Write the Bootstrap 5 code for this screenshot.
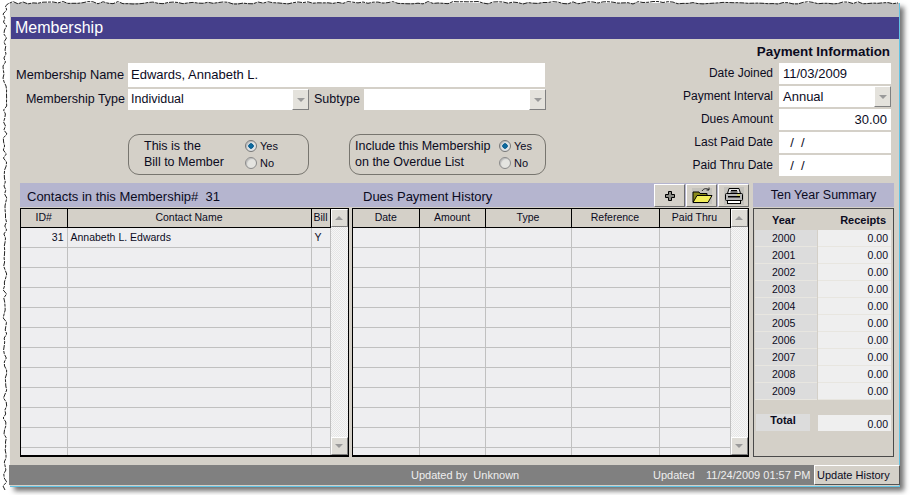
<!DOCTYPE html>
<html lang="en"><head><meta charset="utf-8"><title>Membership</title>
<link href="https://cdn.jsdelivr.net/npm/bootstrap@5.3.0/dist/css/bootstrap.min.css" rel="stylesheet">
<style>
html,body{height:495px;overflow:hidden;background:#fff}
body{font-family:"Liberation Sans",Arial,sans-serif;font-size:12.5px;color:#0b0b1e;line-height:1.2}
.torn{position:absolute;left:0;top:0;width:910px;height:495px;pointer-events:none}
.win{position:absolute;left:10px;top:3px;width:890px;height:484px;background:#d4d0c8;box-shadow:4px 4px 5px rgba(0,0,0,.55);border-right:1px solid #62c3e4;border-bottom:1px solid #62c3e4;display:flex;flex-direction:column}
.topstrip{height:14px;background:#c0c0c0;flex:none}
.titlebar{height:22px;margin-left:1px;background:#453f8b;color:#fff;font-size:16px;line-height:22px;padding-left:4px;flex:none}
.formarea{height:137px;flex:none;padding-right:8px}
.leftcol{width:536px;padding-top:24px;flex:none}
.lbl{white-space:nowrap}
.inp{background:#fff;height:100%;padding:0 3px;display:flex;align-items:center;white-space:nowrap;font-size:13px;flex:none}
.namerow{height:24px;margin-bottom:2px;padding-left:6px}
.namerow .lbl{width:109px;text-align:left;font-size:12.8px}
.namerow .inp{width:417px;margin-left:3px}
.typerow{height:21px;padding-left:6px}
.typerow .lbl{width:109px;text-align:right;font-size:12.5px}
.typerow .inp{margin-left:3px;font-size:12.5px}
.combo{position:relative;width:181px}
.combo2{width:182px}
.dropb{position:absolute;right:0;top:0;bottom:0;width:17px;background:#e4e2dc;border:1px solid;border-color:#fff #808080 #808080 #fff;display:flex;align-items:center;justify-content:center}
.tri{width:0;height:0;border-left:4px solid transparent;border-right:4px solid transparent;border-top:4px solid #9a9a9a}
.triup{border-top:0;border-bottom:4px solid #9a9a9a}
.subl{width:55px;padding-left:5px;font-size:12.5px;flex:none}
.radiorow{margin:24px 0 0 118px;gap:40px}
.rbox{height:41px;border:1px solid #77756f;border-radius:11px;display:flex;align-items:center;font-size:12.5px;line-height:16px;flex:none}
.rbox1{width:181px;padding-left:15px}
.rbox2{width:197px;padding-left:5px}
.rtxt1{width:101px;margin-top:-2px}
.rtxt2{width:144px;margin-top:-2px}
.rgroup{font-size:11px;line-height:17px}
.rgroup label{display:flex;align-items:center;gap:3px}
.rgroup .form-check-input{width:12px;height:12px;margin:0;background:#e4e4e0;border:1px solid #8a8a8a;box-shadow:inset 1px 1px 1px #bbb}
.rgroup .form-check-input:checked{background:radial-gradient(circle,#0c6fa8 0,#0c5f90 35%,#dfe3e6 42%);border-color:#777}
.rightcol{flex:1;padding-top:6px}
.payhead{font-weight:700;text-align:right;font-size:13.4px;height:14px;line-height:14px;padding-right:1px;margin-bottom:4px}
.payrow{height:21px;margin-bottom:2px;justify-content:flex-end}
.payrow .lbl{font-size:12px;margin-right:6px}
.payrow .inp{width:112px;font-size:13px;padding:0 4px 0 4px}
.gridarea{margin:7px 5px 0 10px;gap:4px;flex:none;height:274px}
.mainpanel{width:729px}
.band{height:24px;background:#b5b5cf;flex:none}
.bandt1{width:332px;padding-left:7px;font-size:13px;line-height:27px}
.bandt2{font-size:13px;padding-left:11px;line-height:28px;flex:1}
.tbtn{width:31px;height:23px;margin:1px 0 0 1px;background:#d4d0c8;border:1px solid;border-color:#fff #6d6d6d #6d6d6d #fff;padding:0;display:flex;align-items:center;justify-content:center;border-radius:0}
.grids{gap:3px;margin-top:1px;height:249px}
.gridbox{border:1px solid #000;border-width:1px 1px 2px 1px;height:249px;display:flex;overflow:hidden;background:#eeeef0}
.gbox1{width:329px}
.gbox2{width:397px}
.gridbox .gridtbl{table-layout:fixed;border-collapse:collapse;margin:0;height:auto;font-size:10.5px;background:#eeeef0;flex:none}
.gridtbl th{height:18px;padding:0;font-weight:400;background:#d4d0c8;text-align:center;vertical-align:middle;border-right:1px solid #000;border-bottom:1px solid #000;box-shadow:none;color:#0b0b1e}
.gridtbl td{height:20px;padding:0 3px;border:0;border-right:1px solid #c0c0c0;border-bottom:1px solid #c0c0c0;background:#eeeef0;color:#0b0b1e;box-shadow:none;white-space:nowrap;vertical-align:middle}
.scrollv{flex:1;display:flex;flex-direction:column;justify-content:space-between;background:conic-gradient(#f6f6f6 25%,#e6e6e6 0 50%,#f6f6f6 0 75%,#e6e6e6 0) 0 0/2px 2px}
.scrbtn{height:18px;background:#dedcd6;border:1px solid;border-color:#fff #808080 #808080 #fff;display:flex;align-items:center;justify-content:center}
.sidepanel{width:142px}
.bandside{height:24px;background:#b5b5cf;text-align:center;font-size:12.5px;line-height:24px;margin-bottom:1px}
.sumbox{border:1px solid #4a4a4a;height:249px;font-size:10.5px;padding:1px 2px 0 1px}
.sumhead{height:20px;font-weight:700;font-size:11px;line-height:20px}
.sumhead .yr{width:62px;padding-left:17px}
.sumhead .rc{flex:1;text-align:right;padding-right:5px}
.sumrow{height:17px;line-height:17px}
.sumrow .yr{width:62px;background:#dcdcdc;padding-left:17px;margin-right:1px;border-bottom:1px solid #e8e6e0}
.sumrow .rc{flex:1;background:#efefef;text-align:right;padding-right:3px;border-bottom:1px solid #e8e6e0}
.sumtot{margin-top:14px;height:17px;line-height:13px;font-weight:700;font-size:11px}
.sumtot .yr{width:54px;margin:0 8px 0 1px;background:#dcdcdc;text-align:center;height:17px}
.sumtot .rc{flex:1;background:#efefef;text-align:right;padding-right:3px;font-weight:400;font-size:10.5px;line-height:18px;height:16px;margin-top:1px}
.statusbar{margin-top:8px;height:20px;background:#808080;color:#eee;font-size:11px;margin-left:-1px;width:891px;flex:none;line-height:21px;position:relative}
.stat1{margin-left:402px;width:242px}
.stat2{width:53px}
.stat3{width:108px}
.updbtn{width:86px;height:20px;background:#d4d0c8;color:#0b0b1e;font-size:11px;border:1px solid;border-color:#fff #555 #555 #fff;padding:0 0 0 2px;border-radius:0;line-height:18px;text-align:left}
</style></head>
<body>
<div class="win">
  <div class="topstrip"></div>
  <div class="titlebar">Membership</div>
  <div class="formarea d-flex">
    <div class="leftcol">
      <div class="namerow d-flex align-items-center"><span class="lbl">Membership Name</span><div class="inp">Edwards, Annabeth L.</div></div>
      <div class="typerow d-flex align-items-center"><span class="lbl">Membership Type</span>
        <div class="inp combo">Individual<span class="dropb"><span class="tri"></span></span></div>
        <span class="subl">Subtype</span>
        <div class="inp combo combo2 ms-0"><span class="dropb"><span class="tri"></span></span></div>
      </div>
      <div class="radiorow d-flex">
        <div class="rbox rbox1"><div class="rtxt1">This is the<br>Bill to Member</div>
          <div class="rgroup"><label><input class="form-check-input" type="radio" name="r1" checked>Yes</label><label><input class="form-check-input" type="radio" name="r1">No</label></div></div>
        <div class="rbox rbox2"><div class="rtxt2">Include this Membership<br>on the Overdue List</div>
          <div class="rgroup"><label><input class="form-check-input" type="radio" name="r2" checked>Yes</label><label><input class="form-check-input" type="radio" name="r2">No</label></div></div>
      </div>
    </div>
    <div class="rightcol">
      <div class="payhead">Payment Information</div>
      <div class="payrow d-flex align-items-center"><span class="lbl">Date Joined</span><div class="inp">11/03/2009</div></div>
      <div class="payrow d-flex align-items-center"><span class="lbl">Payment Interval</span><div class="inp combo">Annual<span class="dropb"><span class="tri"></span></span></div></div>
      <div class="payrow d-flex align-items-center"><span class="lbl">Dues Amount</span><div class="inp justify-content-end">30.00</div></div>
      <div class="payrow d-flex align-items-center"><span class="lbl">Last Paid Date</span><div class="inp">&nbsp;&nbsp;/&nbsp;&nbsp;/</div></div>
      <div class="payrow d-flex align-items-center"><span class="lbl">Paid Thru Date</span><div class="inp">&nbsp;&nbsp;/&nbsp;&nbsp;/</div></div>
    </div>
  </div>
  <div class="gridarea d-flex">
    <div class="mainpanel d-flex flex-column">
      <div class="band d-flex">
        <div class="bandt1">Contacts in this Membership#&nbsp; 31</div>
        <div class="bandt2">Dues Payment History</div>
        <button class="tbtn btn" type="button" aria-label="Add"><svg width="12" height="12" viewBox="0 0 12 12"><path d="M4.500 1.500h3v3h3v3h-3v3h-3v-3h-3v-3h3z" fill="#8a8a84" stroke="#000" stroke-width="1"/></svg></button>
        <button class="tbtn btn" type="button" aria-label="Open"><svg width="22" height="18" viewBox="0 0 22 18"><rect x="1" y="1" width="20" height="16" fill="#c4c2bc"/><path d="M2 15V5h6l1 1.500h7V15z" fill="#8a8a1a" stroke="#000"/><path d="M2 15.500L6 8.500h15l-4 7z" fill="#f2ee5a" stroke="#000"/><path d="M11 4c2-3 5-3 7-1M18 3V0.500M18 3h-2.500" fill="none" stroke="#222" stroke-width="1"/></svg></button>
        <button class="tbtn btn" type="button" aria-label="Print"><svg width="20" height="18" viewBox="0 0 20 18"><rect width="20" height="18" fill="#c4c2bc"/><path d="M5 1.500h10l1.500 5h-13z" fill="#e6e6e6" stroke="#000"/><rect x="1.500" y="6.500" width="17" height="7" rx="1" fill="#b8b8b8" stroke="#000"/><rect x="4" y="9" width="12" height="1.500" fill="#000"/><rect x="13" y="7.500" width="3" height="1" fill="#e6e020"/><rect x="3.500" y="13.500" width="13" height="3" fill="#fff" stroke="#000"/><path d="M7 3.500h6M6.500 5h7" stroke="#000"/></svg></button>
      </div>
      <div class="grids d-flex">
        <div class="gridbox gbox1">
          <table class="table gridtbl" style="width:309px"><colgroup><col style="width:46px"><col style="width:244px"><col style="width:19px"></colgroup>
            <thead><tr><th>ID#</th><th>Contact Name</th><th>Bill</th></tr></thead>
            <tbody id="tb1"><tr><td class="text-end">31</td><td>Annabeth L. Edwards</td><td>Y</td></tr></tbody></table>
          <div class="scrollv"><div class="scrbtn"><span class="tri triup"></span></div><div class="scrbtn"><span class="tri"></span></div></div>
        </div>
        <div class="gridbox gbox2">
          <table class="table gridtbl" style="width:377px"><colgroup><col style="width:66px"><col style="width:66px"><col style="width:86px"><col style="width:88px"><col style="width:71px"></colgroup>
            <thead><tr><th>Date</th><th>Amount</th><th>Type</th><th>Reference</th><th>Paid Thru</th></tr></thead>
            <tbody id="tb2"></tbody></table>
          <div class="scrollv"><div class="scrbtn"><span class="tri triup"></span></div><div class="scrbtn"><span class="tri"></span></div></div>
        </div>
      </div>
    </div>
    <div class="sidepanel">
      <div class="bandside">Ten Year Summary</div>
      <div class="sumbox">
        <div class="sumhead d-flex"><div class="yr">Year</div><div class="rc">Receipts</div></div>
        <div id="sumrows"></div>
        <div class="sumtot d-flex"><div class="yr">Total</div><div class="rc">0.00</div></div>
      </div>
    </div>
  </div>
  <div class="statusbar d-flex">
    <div class="stat1">Updated by&nbsp; Unknown</div><div class="stat2">Updated</div><div class="stat3">11/24/2009 01:57 PM</div>
    <button class="updbtn btn" type="button">Update History</button>
  </div>
</div>
<svg class="torn" viewBox="0 0 910 495" aria-hidden="true"><path id="tp" fill="none" stroke="#222" stroke-width="1" stroke-dasharray="5 1 3 1"/></svg>
<script>
function rows(id,n,k){var t=document.getElementById(id),h='';for(var i=0;i<n;i++){h+='<tr>'+'<td></td>'.repeat(k)+'</tr>';}t.insertAdjacentHTML('beforeend',h);}
rows('tb1',11,3);rows('tb2',12,5);
var s='';for(var y=2000;y<=2009;y++){s+='<div class="sumrow d-flex"><div class="yr">'+y+'</div><div class="rc">0.00</div></div>';}
document.getElementById('sumrows').innerHTML=s;
var seed=7;function r(){seed=(seed*16807)%2147483647;return seed/2147483647;}
var d='M5 490';for(var yy=486;yy>3;yy-=4){d+=' L'+(3+r()*4).toFixed(1)+' '+yy;}
for(var x=8;x<899;x+=5){d+=' L'+x+' '+(1.5+r()*2.5).toFixed(1);}
document.getElementById('tp').setAttribute('d',d);
</script>
<script src="https://cdn.jsdelivr.net/npm/bootstrap@5.3.0/dist/js/bootstrap.bundle.min.js"></script>
</body></html>
